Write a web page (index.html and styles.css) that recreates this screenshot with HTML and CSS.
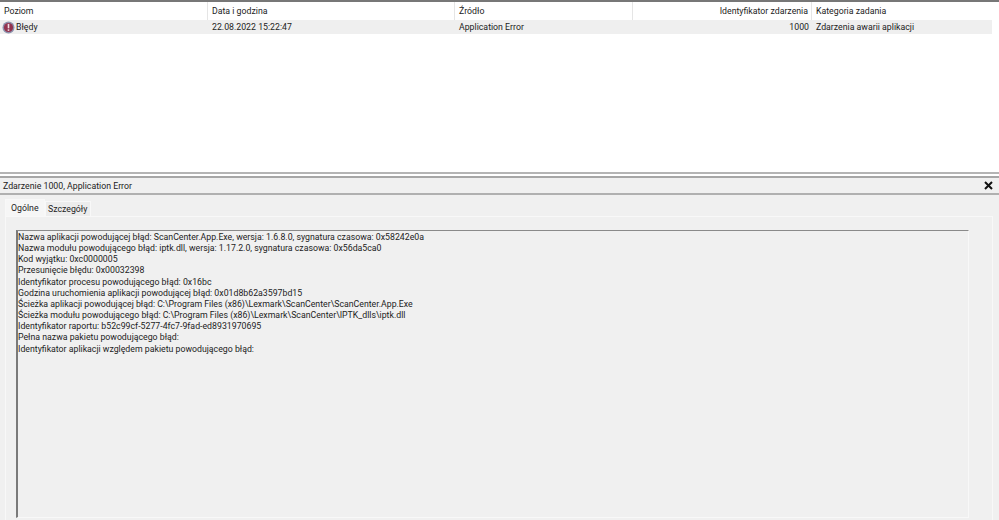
FILE: index.html
```html
<!DOCTYPE html>
<html lang="pl">
<head>
<meta charset="utf-8">
<title>Zdarzenie 1000</title>
<link rel="stylesheet" href="styles.css">
</head>
<body>
<div class="app">
  <section class="list">
    <div class="row head">
      <div class="c c1">Poziom</div>
      <div class="c c2">Data i godzina</div>
      <div class="c c3">Źródło</div>
      <div class="c c4">Identyfikator zdarzenia</div>
      <div class="c c5">Kategoria zadania</div>
    </div>
    <div class="row item">
      <div class="c c1 level">
        <svg class="err" width="13" height="13" viewBox="0 0 13 13"><circle cx="6.5" cy="6.5" r="6" fill="#8d93ad"/><circle cx="6.5" cy="6.5" r="4.6" fill="#93334f"/><rect x="5.7" y="2.9" width="1.6" height="4.4" fill="#efdde2"/><rect x="5.7" y="8.3" width="1.6" height="1.6" fill="#efdde2"/></svg>
        <span class="lvl">Błędy</span>
      </div>
      <div class="c c2">22.08.2022 15:22:47</div>
      <div class="c c3">Application Error</div>
      <div class="c c4">1000</div>
      <div class="c c5">Zdarzenia awarii aplikacji</div>
    </div>
  </section>
  <section class="detail">
    <div class="title">
      <span>Zdarzenie 1000, Application Error</span>
      <svg class="close" width="9" height="9" viewBox="0 0 9 9"><path d="M1 1l7 7M8 1l-7 7" stroke="#111" stroke-width="2" fill="none"/></svg>
    </div>
    <div class="tabs">
      <div class="tab on">Ogólne</div>
      <div class="tab">Szczegóły</div>
    </div>
    <div class="panel">
      <div class="box">
        <div>Nazwa aplikacji powodującej błąd: ScanCenter.App.Exe, wersja: 1.6.8.0, sygnatura czasowa: 0x58242e0a</div>
        <div>Nazwa modułu powodującego błąd: iptk.dll, wersja: 1.17.2.0, sygnatura czasowa: 0x56da5ca0</div>
        <div>Kod wyjątku: 0xc0000005</div>
        <div>Przesunięcie błędu: 0x00032398</div>
        <div>Identyfikator procesu powodującego błąd: 0x16bc</div>
        <div>Godzina uruchomienia aplikacji powodującej błąd: 0x01d8b62a3597bd15</div>
        <div>Ścieżka aplikacji powodującej błąd: C:\Program Files (x86)\Lexmark\ScanCenter\ScanCenter.App.Exe</div>
        <div>Ścieżka modułu powodującego błąd: C:\Program Files (x86)\Lexmark\ScanCenter\IPTK_dlls\iptk.dll</div>
        <div>Identyfikator raportu: b52c99cf-5277-4fc7-9fad-ed8931970695</div>
        <div>Pełna nazwa pakietu powodującego błąd:</div>
        <div>Identyfikator aplikacji względem pakietu powodującego błąd:</div>
      </div>
    </div>
  </section>
</div>
</body>
</html>
```
FILE: styles.css
```css
* { box-sizing: border-box; }
html, body { margin: 0; height: 100%; overflow: hidden; }
body { font-family: Roboto, "Open Sans", sans-serif; font-size: 8.75px; color: #1c1c1c; background: #fff; }
.app { width: 999px; height: 520px; display: flex; flex-direction: column; }
.list { height: 174px; border-top: 2px solid #777; border-bottom: 2px solid #b4b4b4; padding-right: 7px; }
.row { display: flex; white-space: nowrap; }
.head { height: 18px; align-items: center; }
.head .c { height: 100%; line-height: 18px; border-right: 1px solid #e5e5e5; }
.item { height: 14px; background: #efefef; line-height: 14px; }
.c { padding-left: 4px; }
.c1 { width: 208px; }
.c2 { width: 247px; }
.c3 { width: 178px; }
.c4 { width: 179px; text-align: right; padding-right: 3px; }
.c5 { flex: 1; padding-left: 4px; }
.head .c5 { border-right: 0; }
.level { display: flex; align-items: center; padding-left: 2px; }
.err { flex: none; margin-right: 1px; }
.lvl { background: #efefef; }
.detail { flex: 1; min-height: 0; display: flex; flex-direction: column; background: #f0f0f0; margin-top: 2px; border-top: 2px solid #a6a6a6; }
.title { height: 17px; flex: none; display: flex; align-items: center; justify-content: space-between; padding: 0 6px 0 3px; border-bottom: 2px solid #b0b0b0; }
.tabs { display: flex; flex: none; height: 21px; padding: 5px 0 0 5px; }
.tab { padding: 0 3px 0 2px; line-height: 15px; border: 1px solid #f8f8f8; border-bottom: 0; background: #ececec; margin-top: 1px; height: 15px; }
.tab.on { width: 40px; background: #f6f6f6; margin-top: -1px; height: 17px; line-height: 16px; padding: 0 4px 0 5px; position: relative; z-index: 1; margin-bottom: -1px; }
.panel { flex: 1; min-height: 0; margin: 0 6px 0 5px; border: 1px solid #f8f8f8; border-bottom: 0; padding: 13px 23px 0 10px; display: flex; }
.box { flex: 1; height: 288px; border-top: 1px solid #8a8a8a; border-left: 2px solid #7a7a7a; border-right: 1px solid #f8f8f8; border-bottom: 1px solid #f8f8f8; line-height: 11.15px; padding-top: 1px; }
```
